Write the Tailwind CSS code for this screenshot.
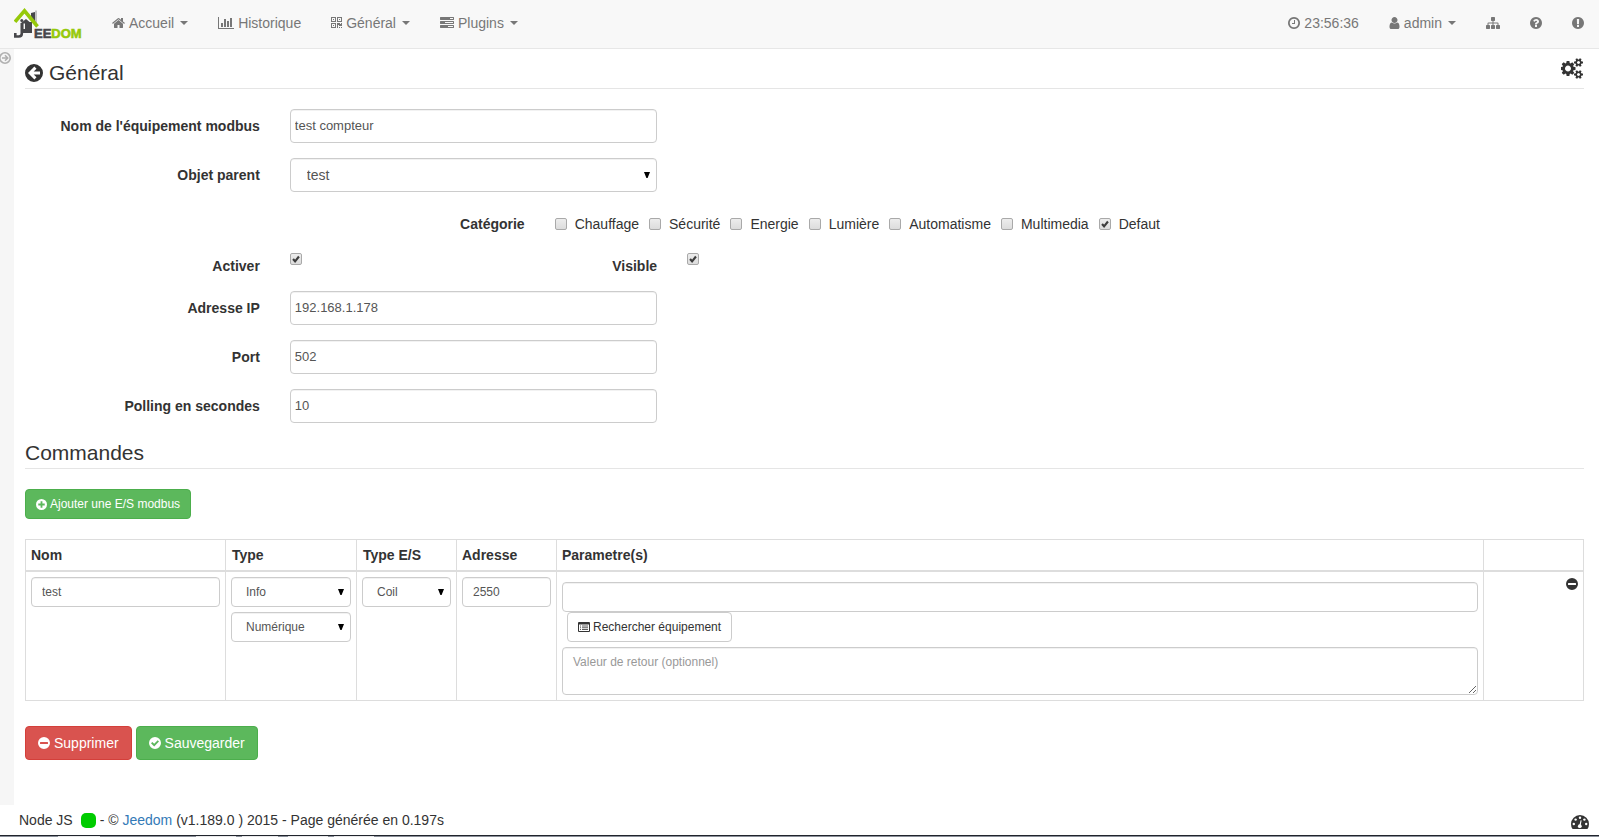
<!DOCTYPE html>
<html lang="fr">
<head>
<meta charset="utf-8">
<meta name="viewport" content="width=device-width, initial-scale=1">
<title>Jeedom - Modbus</title>
<script src="https://cdn.jsdelivr.net/npm/@tailwindcss/browser@4"></script>
</head>
<body class="flex min-h-screen flex-col bg-white font-['Liberation_Sans',Arial,sans-serif] text-sm text-[#333]">

<svg class="hidden" aria-hidden="true">
  <symbol id="home" viewBox="64 0 1664 1792"><path d="M1472 992v480q0 26-19 45t-45 19h-384v-384h-256v384h-384q-26 0-45-19t-19-45v-480q0-1 .5-3t.5-3l575-474 575 474q1 2 1 6zm223-69l-62 74q-8 9-21 11h-3q-13 0-21-7l-692-577-692 577q-12 8-24 7-13-2-21-11l-62-74q-8-10-7-23.5t11-21.5l719-599q32-26 76-26t76 26l244 204v-195q0-14 9-23t23-9h192q14 0 23 9t9 23v408l219 182q10 8 11 21.5t-7 23.5z"/></symbol>
  <symbol id="chart" viewBox="0 0 2048 1792"><path d="M640 896v512h-256v-512h256zm384-512v1024h-256v-1024h256zm1024 1152v128h-2048v-1536h128v1408h1920zm-640-896v768h-256v-768h256zm384-384v1152h-256v-1152h256z"/></symbol>
  <symbol id="qr" viewBox="0 0 1408 1792"><path d="M384 1152v128h-128v-128h128zm0-768v128h-128v-128h128zm768 0v128h-128v-128h128zm-1024 1023h384v-383h-384v383zm0-767h384v-384h-384v384zm768 0h384v-384h-384v384zm-256 256v640h-640v-640h640zm512 512v128h-128v-128h128zm256 0v128h-128v-128h128zm0-512v384h-384v-128h-128v384h-128v-640h384v128h128v-128h128zm-768-768v640h-640v-640h640zm768 0v640h-640v-640h640z"/></symbol>
  <symbol id="tasks" viewBox="0 0 1792 1792"><path d="M1024 1408h640v-128h-640v128zm-384-512h1024v-128h-1024v128zm640-512h384v-128h-384v128zm512 832v256q0 26-19 45t-45 19h-1664q-26 0-45-19t-19-45v-256q0-26 19-45t45-19h1664q26 0 45 19t19 45zm0-512v256q0 26-19 45t-45 19h-1664q-26 0-45-19t-19-45v-256q0-26 19-45t45-19h1664q26 0 45 19t19 45zm0-512v256q0 26-19 45t-45 19h-1664q-26 0-45-19t-19-45v-256q0-26 19-45t45-19h1664q26 0 45 19t19 45z"/></symbol>
  <symbol id="clock" viewBox="128 0 1536 1792"><path d="M1024 544v448q0 14-9 23t-23 9h-320q-14 0-23-9t-9-23v-64q0-14 9-23t23-9h224v-352q0-14 9-23t23-9h64q14 0 23 9t9 23zm416 352q0-148-73-273t-198-198-273-73-273 73-198 198-73 273 73 273 198 198 273 73 273-73 198-198 73-273zm224 0q0 209-103 385.5t-279.5 279.5-385.5 103-385.5-103-279.5-279.5-103-385.5 103-385.5 279.5-279.5 385.5-103 385.5 103 279.5 279.5 103 385.5z"/></symbol>
  <symbol id="user" viewBox="256 0 1280 1792"><path d="M1536 1399q0 109-62.5 187t-150.5 78h-854q-88 0-150.5-78t-62.5-187q0-85 8.5-160.5t31.5-152 58.5-131 94-89 134.5-34.5q131 128 313 128t313-128q76 0 134.5 34.5t94 89 58.5 131 31.5 152 8.5 160.5zm-256-887q0 159-112.5 271.5t-271.5 112.5-271.5-112.5-112.5-271.5 112.5-271.5 271.5-112.5 271.5 112.5 112.5 271.5z"/></symbol>
  <symbol id="sitemap" viewBox="0 0 1792 1792"><path d="M1792 1248v320q0 40-28 68t-68 28h-320q-40 0-68-28t-28-68v-320q0-40 28-68t68-28h96v-192h-512v192h96q40 0 68 28t28 68v320q0 40-28 68t-68 28h-320q-40 0-68-28t-28-68v-320q0-40 28-68t68-28h96v-192h-512v192h96q40 0 68 28t28 68v320q0 40-28 68t-68 28h-320q-40 0-68-28t-28-68v-320q0-40 28-68t68-28h96v-192q0-52 38-90t90-38h512v-192h-96q-40 0-68-28t-28-68v-320q0-40 28-68t68-28h320q40 0 68 28t28 68v320q0 40-28 68t-68 28h-96v192h512q52 0 90 38t38 90v192h96q40 0 68 28t28 68z"/></symbol>
  <symbol id="question" viewBox="128 0 1536 1792"><path d="M1024 1376v-192q0-14-9-23t-23-9h-192q-14 0-23 9t-9 23v192q0 14 9 23t23 9h192q14 0 23-9t9-23zm256-672q0-88-55.5-163t-138.5-116-170-41q-243 0-371 213-15 24 8 42l132 100q7 6 19 6 16 0 25-12 53-68 86-92 34-24 86-24 48 0 85.5 26t37.5 59q0 38-20 61t-68 45q-63 28-115.5 86.5t-52.5 125.5v36q0 14 9 23t23 9h192q14 0 23-9t9-23q0-19 21.5-49.5t54.5-49.5q32-18 49-28.5t46-35 44.5-48 28-60.5 12.5-81zm384 192q0 209-103 385.5t-279.5 279.5-385.5 103-385.5-103-279.5-279.5-103-385.5 103-385.5 279.5-279.5 385.5-103 385.5 103 279.5 279.5 103 385.5z"/></symbol>
  <symbol id="exclaim" viewBox="128 0 1536 1792"><path d="M896 128q209 0 385.5 103t279.5 279.5 103 385.5-103 385.5-279.5 279.5-385.5 103-385.5-103-279.5-279.5-103-385.5 103-385.5 279.5-279.5 385.5-103zm128 1247v-190q0-14-9-23.5t-22-9.5h-192q-13 0-23 10t-10 23v190q0 13 10 23t23 10h192q13 0 22-9.5t9-23.5zm-2-344l18-621q0-12-10-18-10-8-24-8h-220q-14 0-24 8-10 6-10 18l17 621q0 10 10 17.5t24 7.5h185q14 0 23.5-7.5t10.5-17.5z"/></symbol>
  <symbol id="cogs" viewBox="0 0 1920 1792"><path d="M832 896q0-106-75-181t-181-75-181 75-75 181 75 181 181 75 181-75 75-181zm768 512q0-52-38-90t-90-38-90 38-38 90q0 53 37.5 90.5t90.5 37.5 90.5-37.5 37.5-90.5zm0-1024q0-52-38-90t-90-38-90 38-38 90q0 53 37.5 90.5t90.5 37.5 90.5-37.5 37.5-90.5zm-384 421v185q0 10-7 19.5t-16 10.5l-155 24q-11 35-32 76 34 48 90 115 7 11 7 20 0 12-7 19-23 30-82.5 89.5t-78.5 59.5q-11 0-21-7l-115-90q-37 19-77 31-11 108-23 155-7 24-30 24h-186q-11 0-20-7.5t-10-17.5l-23-153q-34-10-75-31l-118 89q-7 7-20 7-11 0-21-8-144-133-144-160 0-9 7-19 10-14 41-53t47-61q-23-44-35-82l-152-24q-10-1-17-9.5t-7-19.5v-185q0-10 7-19.5t16-10.5l155-24q11-35 32-76-34-48-90-115-7-11-7-20 0-12 7-20 22-30 82-89t79-59q11 0 21 7l115 90q34-18 77-32 11-108 23-154 7-24 30-24h186q11 0 20 7.5t10 17.5l23 153q34 10 75 31l118-89q8-7 20-7 11 0 21 8 144 133 144 160 0 8-7 19-12 16-42 54t-45 60q23 48 34 82l152 23q10 2 17 10.5t7 19.5zm640 533v140q0 16-149 31-12 27-30 52 51 113 51 138 0 4-4 7-122 71-124 71-8 0-46-47t-52-68q-20 2-30 2t-30-2q-14 21-52 68t-46 47q-2 0-124-71-4-3-4-7 0-25 51-138-18-25-30-52-149-15-149-31v-140q0-16 149-31 13-29 30-52-51-113-51-138 0-4 4-7 4-2 35-20t59-34 30-16q8 0 46 46.5t52 67.5q20-2 30-2t30 2q51-71 92-112l6-2q4 0 124 70 4 3 4 7 0 25-51 138 17 23 30 52 149 15 149 31zm0-1024v140q0 16-149 31-12 27-30 52 51 113 51 138 0 4-4 7-122 71-124 71-8 0-46-47t-52-68q-20 2-30 2t-30-2q-14 21-52 68t-46 47q-2 0-124-71-4-3-4-7 0-25 51-138-18-25-30-52-149-15-149-31v-140q0-16 149-31 13-29 30-52-51-113-51-138 0-4 4-7 4-2 35-20t59-34 30-16q8 0 46 46.5t52 67.5q20-2 30-2t30 2q51-71 92-112l6-2q4 0 124 70 4 3 4 7 0 25-51 138 17 23 30 52 149 15 149 31z"/></symbol>
  <symbol id="caret" viewBox="0 0 8 4"><path d="M0 0h8L4 4z"/></symbol>
  <symbol id="drop" viewBox="0 0 6 6"><path d="M0 0h6L3.600 6H2.400z"/></symbol>
  <symbol id="tick" viewBox="0 0 13 13"><path d="M3.300 6.500L5.500 9L9.700 3.800" fill="none" stroke="#3d3d3d" stroke-width="2.300"/></symbol>
  <symbol id="minus" viewBox="0 0 12 12"><path fill-rule="evenodd" d="M6 0a6 6 0 110 12A6 6 0 016 0zM2.500 5a.5.5 0 00-.5.5v1a.5.5 0 00.5.5h7a.5.5 0 00.5-.5v-1a.5.5 0 00-.5-.5z"/></symbol>
  <symbol id="plus" viewBox="0 0 12 12"><path fill-rule="evenodd" d="M6 0a6 6 0 110 12A6 6 0 016 0zM5 2.500V5H2.500v2H5v2.500h2V7h2.500V5H7V2.500z"/></symbol>
  <symbol id="check" viewBox="0 0 12 12"><path fill-rule="evenodd" d="M6 0a6 6 0 110 12A6 6 0 016 0zM2 6.200L5.200 9.400L10 4.600L8.700 3.300L5.200 6.800L3.300 4.900z"/></symbol>
  <symbol id="back" viewBox="0 0 18 18"><path fill-rule="evenodd" d="M9 0a9 9 0 110 18A9 9 0 019 0zM3 9l6.400 6.400l2.100-2.100L8.700 10.500H15v-3H8.700L11.500 4.700L9.400 2.600z"/></symbol>
  <symbol id="listalt" viewBox="0 0 12 10"><path fill-rule="evenodd" d="M1 0h10a1 1 0 011 1v8a1 1 0 01-1 1H1a1 1 0 01-1-1V1a1 1 0 011-1zM1 2.500V9h10V2.500z"/><path d="M2 3.500h1v1H2zM4 3.500h6v1H4zM2 5.300h1v1H2zM4 5.300h6v1H4zM2 7.100h1v1H2zM4 7.100h6v1H4z" opacity=".8"/></symbol>
  <symbol id="gauge" viewBox="0 0 18 14"><path d="M9 0a9 9 0 019 9q0 2.700-1.400 4.700-.2.300-.6.300H2q-.4 0-.6-.3Q0 11.700 0 9a9 9 0 019-9z"/><g fill="#fff"><circle cx="2.800" cy="9" r="1.200"/><circle cx="4.600" cy="4.600" r="1.200"/><circle cx="9" cy="2.800" r="1.200"/><circle cx="13.400" cy="4.600" r="1.200"/><circle cx="15.200" cy="9" r="1.200"/><circle cx="8.800" cy="11.200" r="1.900"/><path d="M8.300 10.500l1.300-5.300l1 .3l-1 5.500z"/></g></symbol>
</svg>

<header class="flex h-[49px] items-center justify-between border-b border-[#e7e7e7] bg-[#f8f8f8] pr-[15px] pb-0.5 pl-3.5 text-[#777]">
  <div class="flex items-center">
    <a href="#" aria-label="Jeedom" class="mr-[29px] block">
      <svg class="h-[31px] w-[69px]" viewBox="0 0 69 31">
        <path fill="#47474b" d="M17 5l4-1v11l-4-5zM7 15l5-4l6 5v9H9.500v-4H11V15.500H9.500V25H7z"/>
        <path fill="#47474b" d="M11 14h7v11h-7z"/>
        <path fill="#8a8a8c" d="M21.500 2.500h1v13h-1z"/>
        <path fill="none" stroke="#47474b" stroke-width="2.600" d="M7.800 15v10.500q0 3-3 3H1.300v-3.500"/>
        <circle cx="7.800" cy="12.500" r="1.500" fill="#47474b"/>
        <path fill="none" stroke="#96c90a" stroke-width="3.600" d="M1 13.800L10.500 2.800L23.500 18.500"/>
        <text x="20" y="29.500" font-family="Liberation Sans, sans-serif" font-weight="700" font-size="13" fill="#47474b" stroke="#47474b" stroke-width=".6">EE<tspan fill="#96c90a" stroke="#96c90a">DOM</tspan></text>
      </svg>
    </a>
    <nav class="flex items-center gap-[30px]">
      <a href="#" class="flex items-center"><svg class="mr-1 h-3.5 w-[13px] fill-current"><use href="#home"/></svg>Accueil<svg class="ml-1.5 h-1 w-2 fill-current"><use href="#caret"/></svg></a>
      <a href="#" class="flex items-center"><svg class="mr-1 h-3.5 w-4 fill-current"><use href="#chart"/></svg>Historique</a>
      <a href="#" class="flex items-center"><svg class="mr-1 h-3.5 w-[11px] fill-current"><use href="#qr"/></svg>Général<svg class="ml-1.5 h-1 w-2 fill-current"><use href="#caret"/></svg></a>
      <a href="#" class="flex items-center"><svg class="mr-1 h-3.5 w-3.5 fill-current"><use href="#tasks"/></svg>Plugins<svg class="ml-1.5 h-1 w-2 fill-current"><use href="#caret"/></svg></a>
    </nav>
  </div>
  <nav class="flex items-center gap-[30px]">
    <a href="#" class="flex items-center"><svg class="mr-1 h-3.5 w-3 fill-current"><use href="#clock"/></svg>23:56:36</a>
    <a href="#" class="flex items-center"><svg class="mr-1 h-3.5 w-[11px] fill-current"><use href="#user"/></svg>admin<svg class="ml-1.5 h-1 w-2 fill-current"><use href="#caret"/></svg></a>
    <a href="#" aria-label="Plan"><svg class="h-3.5 w-3.5 fill-current"><use href="#sitemap"/></svg></a>
    <a href="#" aria-label="Aide"><svg class="h-3.5 w-3 fill-current"><use href="#question"/></svg></a>
    <a href="#" aria-label="Rapport"><svg class="h-3.5 w-3 fill-current"><use href="#exclaim"/></svg></a>
  </nav>
</header>

<div class="flex flex-1">
  <aside class="w-3.5 shrink-0 bg-[#f6f6f6] pt-[3px]">
    <button type="button" aria-label="Ouvrir le menu" class="block">
      <svg class="h-3 w-[11px] text-[#b0b0b0]" viewBox="1 0 11 12" fill="none" stroke="currentColor"><circle cx="6" cy="6" r="5.200" stroke-width="1.600"/><path stroke-width="1.600" d="M3 6h5M6 3.300L8.700 6L6 8.700"/></svg>
    </button>
  </aside>

  <main class="min-w-0 flex-1 pt-[9px] pr-[15px] pl-[11px]">
    <form>
      <div class="mb-5 flex h-[31px] items-center justify-between border-b border-[#e5e5e5] text-[21px]">
        <h1 class="flex items-center gap-1.5"><a href="#" aria-label="Retour"><svg class="h-[18px] w-[18px] fill-[#333]"><use href="#back"/></svg></a>Général</h1>
        <button type="button" aria-label="Configuration" class="mb-2.5"><svg class="h-[21px] w-[23px] fill-[#333]"><use href="#cogs"/></svg></button>
      </div>

      <div class="-mx-[15px] grid grid-cols-12 gap-y-[15px]">
        <label for="nom" class="col-span-2 px-[15px] pt-[7px] text-right font-bold">Nom de l'équipement modbus</label>
        <div class="col-span-3 px-[15px]"><input id="nom" type="text" value="test compteur" class="block h-[34px] w-full rounded-sm border border-[#ccc] px-1 pb-0.5 text-[13px] text-[#555] inset-shadow-2xs"></div>
        <div class="col-span-7"></div>

        <label for="objet" class="col-span-2 px-[15px] pt-[7px] text-right font-bold">Objet parent</label>
        <div class="col-span-3 px-[15px]"><div class="relative">
          <select id="objet" class="block h-[34px] w-full appearance-none rounded border border-[#ccc] bg-white pr-5 pl-4 text-[#555] inset-shadow-2xs"><option>test</option></select>
          <svg class="pointer-events-none absolute top-3.5 right-[7px] h-1.5 w-1.5 fill-black"><use href="#drop"/></svg>
        </div></div>
        <div class="col-span-7"></div>

        <div id="cat" class="col-span-4 px-[15px] pt-[7px] text-right font-bold">Catégorie</div>
        <div role="group" aria-labelledby="cat" class="col-span-8 flex gap-2.5 px-[15px] pt-[7px]">
          <label class="flex items-center gap-2"><input type="checkbox" class="h-3 w-3 appearance-none rounded-xs border border-[#a9a9a9] bg-linear-to-b from-[#ededed] to-[#dcdcdc]">Chauffage</label>
          <label class="flex items-center gap-2"><input type="checkbox" class="h-3 w-3 appearance-none rounded-xs border border-[#a9a9a9] bg-linear-to-b from-[#ededed] to-[#dcdcdc]">Sécurité</label>
          <label class="flex items-center gap-2"><input type="checkbox" class="h-3 w-3 appearance-none rounded-xs border border-[#a9a9a9] bg-linear-to-b from-[#ededed] to-[#dcdcdc]">Energie</label>
          <label class="flex items-center gap-2"><input type="checkbox" class="h-3 w-3 appearance-none rounded-xs border border-[#a9a9a9] bg-linear-to-b from-[#ededed] to-[#dcdcdc]">Lumière</label>
          <label class="flex items-center gap-2"><input type="checkbox" class="h-3 w-3 appearance-none rounded-xs border border-[#a9a9a9] bg-linear-to-b from-[#ededed] to-[#dcdcdc]">Automatisme</label>
          <label class="flex items-center gap-2"><input type="checkbox" class="h-3 w-3 appearance-none rounded-xs border border-[#a9a9a9] bg-linear-to-b from-[#ededed] to-[#dcdcdc]">Multimedia</label>
          <label class="flex items-center gap-2"><span class="grid"><input type="checkbox" checked class="peer col-start-1 row-start-1 h-3 w-3 appearance-none rounded-xs border border-[#a9a9a9] bg-linear-to-b from-[#ededed] to-[#dcdcdc]"><svg class="pointer-events-none invisible col-start-1 row-start-1 h-3 w-3 peer-checked:visible"><use href="#tick"/></svg></span>Defaut</label>
        </div>

        <label for="activer" class="col-span-2 px-[15px] pt-[7px] text-right font-bold">Activer</label>
        <div class="col-span-1 px-[15px] pt-1"><span class="grid w-3"><input id="activer" type="checkbox" checked class="peer col-start-1 row-start-1 h-3 w-3 appearance-none rounded-xs border border-[#a9a9a9] bg-linear-to-b from-[#ededed] to-[#dcdcdc]"><svg class="pointer-events-none invisible col-start-1 row-start-1 h-3 w-3 peer-checked:visible"><use href="#tick"/></svg></span></div>
        <label for="visible" class="col-span-2 px-[15px] pt-[7px] text-right font-bold">Visible</label>
        <div class="col-span-7 px-[15px] pt-1"><span class="grid w-3"><input id="visible" type="checkbox" checked class="peer col-start-1 row-start-1 h-3 w-3 appearance-none rounded-xs border border-[#a9a9a9] bg-linear-to-b from-[#ededed] to-[#dcdcdc]"><svg class="pointer-events-none invisible col-start-1 row-start-1 h-3 w-3 peer-checked:visible"><use href="#tick"/></svg></span></div>

        <label for="ip" class="col-span-2 px-[15px] pt-[7px] text-right font-bold">Adresse IP</label>
        <div class="col-span-3 px-[15px]"><input id="ip" type="text" value="192.168.1.178" class="block h-[34px] w-full rounded-sm border border-[#ccc] px-1 pb-0.5 text-[13px] text-[#555] inset-shadow-2xs"></div>
        <div class="col-span-7"></div>

        <label for="port" class="col-span-2 px-[15px] pt-[7px] text-right font-bold">Port</label>
        <div class="col-span-3 px-[15px]"><input id="port" type="text" value="502" class="block h-[34px] w-full rounded-sm border border-[#ccc] px-1 pb-0.5 text-[13px] text-[#555] inset-shadow-2xs"></div>
        <div class="col-span-7"></div>

        <label for="polling" class="col-span-2 px-[15px] pt-[7px] text-right font-bold">Polling en secondes</label>
        <div class="col-span-3 px-[15px]"><input id="polling" type="text" value="10" class="block h-[34px] w-full rounded-sm border border-[#ccc] px-1 pb-0.5 text-[13px] text-[#555] inset-shadow-2xs"></div>
        <div class="col-span-7"></div>
      </div>

      <h2 class="mt-[15px] mb-5 h-[31px] border-b border-[#e5e5e5] text-[21px] leading-[30px]">Commandes</h2>

      <button type="button" class="flex h-[30px] items-center gap-[3px] rounded-sm border border-[#4cae4c] bg-[#5cb85c] px-2.5 text-xs text-white"><svg class="h-[11px] w-[11px] fill-white"><use href="#plus"/></svg>Ajouter une E/S modbus</button>

      <table class="mt-5 w-full table-fixed border-collapse border border-[#ddd]">
        <colgroup><col class="w-[200px]"><col class="w-[131px]"><col class="w-[100px]"><col class="w-[100px]"><col><col class="w-[100px]"></colgroup>
        <thead>
          <tr class="h-[31px] border-b-2 border-[#ddd] text-left">
            <th class="border-x border-[#ddd] px-[5px]">Nom</th>
            <th class="border-x border-[#ddd] px-1.5">Type</th>
            <th class="border-x border-[#ddd] px-1.5">Type E/S</th>
            <th class="border-x border-[#ddd] px-[5px]">Adresse</th>
            <th class="border-x border-[#ddd] px-[5px]">Parametre(s)</th>
            <th class="border-x border-[#ddd]"></th>
          </tr>
        </thead>
        <tbody>
          <tr class="align-top text-xs">
            <td class="border-x border-[#ddd] p-[5px]"><input type="text" aria-label="Nom" value="test" class="block h-[30px] w-full rounded-sm border border-[#ccc] px-2.5 text-[#555] inset-shadow-2xs"></td>
            <td class="border-x border-[#ddd] p-[5px]">
              <div class="relative"><select aria-label="Type" class="block h-[30px] w-full appearance-none rounded-sm border border-[#ccc] bg-white pr-5 pl-3.5 text-[#555] inset-shadow-2xs"><option>Info</option></select><svg class="pointer-events-none absolute top-3 right-[7px] h-1.5 w-1.5 fill-black"><use href="#drop"/></svg></div>
              <div class="relative mt-[5px]"><select aria-label="Sous-type" class="block h-[30px] w-full appearance-none rounded-sm border border-[#ccc] bg-white pr-5 pl-3.5 text-[#555] inset-shadow-2xs"><option>Numérique</option></select><svg class="pointer-events-none absolute top-3 right-[7px] h-1.5 w-1.5 fill-black"><use href="#drop"/></svg></div>
            </td>
            <td class="border-x border-[#ddd] p-[5px]"><div class="relative"><select aria-label="Type E/S" class="block h-[30px] w-full appearance-none rounded-sm border border-[#ccc] bg-white pr-5 pl-3.5 text-[#555] inset-shadow-2xs"><option>Coil</option></select><svg class="pointer-events-none absolute top-3 right-[7px] h-1.5 w-1.5 fill-black"><use href="#drop"/></svg></div></td>
            <td class="border-x border-[#ddd] p-[5px]"><input type="text" aria-label="Adresse" value="2550" class="block h-[30px] w-full rounded-sm border border-[#ccc] px-2.5 text-[#555] inset-shadow-2xs"></td>
            <td class="border-x border-[#ddd] px-[5px] pt-2.5 pb-[5px]">
              <input type="text" aria-label="Paramètre" class="block h-[30px] w-full rounded-sm border border-[#ccc] px-2.5 text-[#555] inset-shadow-2xs">
              <button type="button" class="ml-[5px] flex h-[30px] items-center gap-[3px] rounded-sm border border-[#ccc] bg-white px-2.5"><svg class="h-2.5 w-3 fill-[#333]"><use href="#listalt"/></svg>Rechercher équipement</button>
              <textarea aria-label="Valeur de retour" placeholder="Valeur de retour (optionnel)" class="mt-[5px] block h-12 w-full rounded-sm border border-[#ccc] px-2.5 py-[5px] leading-[18px] text-[#555] inset-shadow-2xs placeholder:text-[#999]"></textarea>
            </td>
            <td class="border-x border-[#ddd] p-[5px]"><button type="button" aria-label="Retirer la commande" class="mt-px ml-auto block"><svg class="h-3 w-3 fill-[#333]"><use href="#minus"/></svg></button></td>
          </tr>
        </tbody>
      </table>

      <div class="mt-[25px] flex gap-1 text-white">
        <button type="button" class="flex h-[34px] items-center gap-1 rounded border border-[#d43f3a] bg-[#d9534f] px-3"><svg class="h-3 w-3 fill-white"><use href="#minus"/></svg>Supprimer</button>
        <button type="submit" class="flex h-[34px] items-center gap-1 rounded border border-[#4cae4c] bg-[#5cb85c] px-3"><svg class="h-3 w-3 fill-white"><use href="#check"/></svg>Sauvegarder</button>
      </div>
    </form>
  </main>
</div>

<footer>
  <div class="flex h-[30px] items-center justify-between pr-2.5 pl-[19px]">
    <p class="flex items-center">Node JS <span class="mr-1 ml-2 h-[15px] w-[15px] rounded-[5px] bg-[#00cc00]"></span><span>- © <a href="#" class="text-[#337ab7]">Jeedom</a> (v1.189.0 ) 2015 - Page générée en 0.197s</span></p>
    <a href="#" aria-label="Tableau de bord"><svg class="mt-1 h-3.5 w-[18px] fill-[#333]"><use href="#gauge"/></svg></a>
  </div>
  <div class="flex h-0.5 border-t border-[#20242c] bg-[#8a8f99] pl-[58px]">
    <span class="mr-24 h-px w-[42px] bg-[#e8e8ea]"></span><span class="mr-1.5 h-px w-10 bg-[#e8e8ea]"></span><span class="mr-2.5 h-px w-9 bg-[#e8e8ea]"></span><span class="mr-1.5 h-px w-10 bg-[#e8e8ea]"></span><span class="h-px w-10 bg-[#e8e8ea]"></span>
  </div>
</footer>
</body>
</html>
